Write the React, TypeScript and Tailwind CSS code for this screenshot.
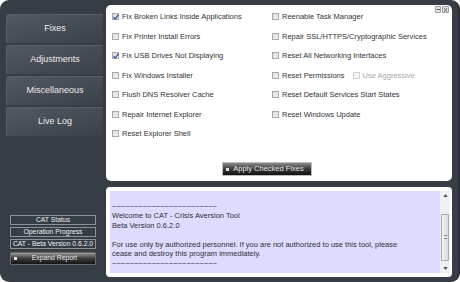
import React from "react";

const font = { fontFamily: '"Liberation Sans", Arial, sans-serif' };

function Box({ checked, disabled }: { checked?: boolean; disabled?: boolean }) {
  return (
    <span
      className={
        "relative inline-block w-[7px] h-[7px] shrink-0 border " +
        (disabled
          ? "border-[#d4d4d4] bg-[#f6f6f6]"
          : "border-[#a8a8a8] bg-gradient-to-br from-[#dcdcdc] to-[#f4f4f4]")
      }
    >
      {checked && (
        <svg viewBox="0 0 8 8" className="absolute -left-[1px] -top-[1px] w-[8px] h-[8px]">
          <path d="M1.5 4.2 L3.2 6 L6.6 1.6" fill="none" stroke="#3a4fa8" strokeWidth="1.3" />
        </svg>
      )}
    </span>
  );
}

function Fix({ label, checked }: { label: string; checked?: boolean }) {
  return (
    <div className="flex items-center gap-[3px] h-[19.5px]">
      <Box checked={checked} />
      <span className="text-[#333]">{label}</span>
    </div>
  );
}

const navItems = ["Fixes", "Adjustments", "Miscellaneous", "Live Log"];
const tildes = "~~~~~~~~~~~~~~~~~~~~~~~~";

export default function App() {
  return (
    <div className="w-[460px] h-[282px] bg-white" style={font}>
      <div className="flex h-full rounded-[9px] bg-[#373d45] border-r-2 border-[#2a2f35]">
        {/* left column */}
        <div className="flex flex-col w-[97px] ml-[6px] pt-[14px] pb-[17px]">
          <div className="flex flex-col gap-[2px]">
            {navItems.map((n) => (
              <div
                key={n}
                className="h-[29px] flex items-center justify-center rounded-tl-[3px] border-t border-l border-[#5a6068] bg-gradient-to-br from-[#535960] to-[#3b4148] text-[9px] text-[#ececec]"
              >
                {n}
              </div>
            ))}
          </div>
          <div className="mt-auto ml-[4px] w-[86px] flex flex-col gap-[2px] text-[6.8px] text-[#f0f0f0]">
            <div className="h-[10px] border border-[#8d939a] flex items-center justify-center">CAT Status</div>
            <div className="h-[10px] border border-[#8d939a] flex items-center justify-center">Operation Progress</div>
            <div className="h-[10px] border border-[#8d939a] flex items-center justify-center">CAT - Beta Version 0.6.2.0</div>
            <div className="mt-[1px] h-[13px] border border-[#6a6a6a] rounded-[1px] bg-gradient-to-b from-[#9a9a9a] via-[#3c3c3c] to-[#151515] flex items-center px-[3px]">
              <span className="w-[3px] h-[3px] bg-[#e8e8e8]" />
              <span className="flex-1 text-center text-[#e6e6e6]">Expand Report</span>
            </div>
          </div>
        </div>

        {/* main column */}
        <div className="flex flex-col w-[346px] ml-[3px] pt-[5px] gap-[6px]">
          <div className="relative h-[176px] bg-white rounded-[5px] flex flex-col text-[7.5px]">
            <div className="absolute top-[1px] right-[3px] flex gap-[1px]">
              <div className="w-[6px] h-[7px] border border-[#9a9a9a] rounded-[1px] bg-[#e2e2e2] flex items-center justify-center">
                <span className="w-[3px] h-[1px] bg-[#555]" />
              </div>
              <div className="w-[7px] h-[7px] border border-[#9a9a9a] rounded-[1px] bg-[#e2e2e2] flex items-center justify-center text-[6px] leading-none text-[#444]">
                X
              </div>
            </div>
            <div className="flex pt-[2px] pl-[6px]">
              <div className="w-[160px] flex flex-col">
                <Fix label="Fix Broken Links Inside Applications" checked />
                <Fix label="Fix Printer Install Errors" />
                <Fix label="Fix USB Drives Not Displaying" checked />
                <Fix label="Fix Windows Installer" />
                <Fix label="Flush DNS Resolver Cache" />
                <Fix label="Repair Internet Explorer" />
                <Fix label="Reset Explorer Shell" />
              </div>
              <div className="flex flex-col">
                <Fix label="Reenable Task Manager" />
                <Fix label="Repair SSL/HTTPS/Cryptographic Services" />
                <Fix label="Reset All Networking Interfaces" />
                <div className="flex items-center h-[19.5px]">
                  <Fix label="Reset Permissions" />
                  <div className="flex items-center gap-[3px] ml-[8px]">
                    <Box disabled />
                    <span className="text-[#a8a8a8]">Use Aggressive</span>
                  </div>
                </div>
                <Fix label="Reset Default Services Start States" />
                <Fix label="Reset Windows Update" />
              </div>
            </div>
            <div className="mt-auto mb-[5px] ml-[116px] w-[90px] h-[14px] border border-[#bdbdbd] bg-gradient-to-b from-[#8c8c8c] via-[#3a3a3a] to-[#111] flex items-center px-[3px] text-[#e4e4e4]">
              <span className="w-[3px] h-[3px] bg-[#e0e0e0]" />
              <span className="flex-1 text-center">Apply Checked Fixes</span>
            </div>
          </div>

          <div className="h-[90px] bg-white rounded-[4px] flex pl-[4px] pr-[2px] py-[4px]">
            <div className="flex-1 bg-[#dddcff] pl-[2px] pt-[1px] text-[7.5px] leading-[9.5px] text-[#2e2e3a]">
              <div className="h-[9.5px]" />
              <div>{tildes}</div>
              <div>Welcome to CAT - Crisis Aversion Tool</div>
              <div>Beta Version 0.6.2.0</div>
              <div className="h-[9.5px]" />
              <div>For use only by authorized personnel. If you are not authorized to use this tool, please</div>
              <div>cease and destroy this program immediately.</div>
              <div>{tildes}</div>
            </div>
            <div className="w-[10px] bg-[#f0f0f0] flex flex-col items-center justify-between py-[3px]">
              <svg viewBox="0 0 6 4" className="w-[5px] h-[3px]">
                <path d="M0 4 L3 0 L6 4 Z" fill="#555" />
              </svg>
              <div className="w-[8px] h-[47px] mt-[10px] border border-[#a8a8a8] rounded-[1px] bg-gradient-to-r from-[#f4f4f4] to-[#dadada] flex items-center justify-center">
                <div className="w-[3px] h-[4px] border-y border-[#888]" />
              </div>
              <svg viewBox="0 0 6 4" className="w-[5px] h-[3px]">
                <path d="M0 0 L3 4 L6 0 Z" fill="#555" />
              </svg>
            </div>
          </div>
        </div>
      </div>
    </div>
  );
}
